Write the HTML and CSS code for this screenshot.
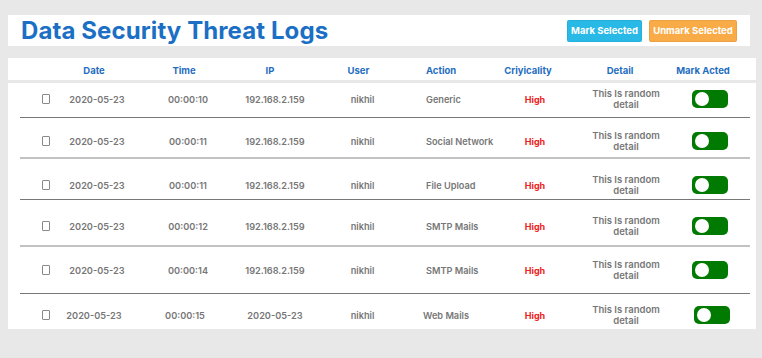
FILE: index.html
```html
<!DOCTYPE html>
<html lang="en">
<head>
    <meta charset="UTF-8">
    <meta name="viewport" content="width=device-width, initial-scale=1.0">
    <title>Data Security Threat Logs</title>
    <link rel="stylesheet" href="styles.css">
</head>
<body>
    <div class="topbar">
        <h1>Data Security Threat Logs</h1>
        <div class="actions">
            <button class="btn btn-mark">Mark Selected</button>
            <button class="btn btn-unmark">Unmark Selected</button>
        </div>
    </div>

    <div class="logs">
        <div class="logs-head grid">
            <div></div>
            <div class="c-date">Date</div>
            <div class="c-time">Time</div>
            <div class="c-ip">IP</div>
            <div class="c-user">User</div>
            <div class="c-action">Action</div>
            <div class="c-crit">Criyicality</div>
            <div class="c-detail">Detail</div>
            <div class="c-mark">Mark Acted</div>
        </div>

        <div class="logs-body">
            <div class="log-row grid">
                <div class="c-check"><span class="checkbox"></span></div>
                <div class="c-date">2020-05-23</div>
                <div class="c-time">00:00:10</div>
                <div class="c-ip">192.168.2.159</div>
                <div class="c-user">nikhil</div>
                <div class="c-action">Generic</div>
                <div class="c-crit">High</div>
                <div class="c-detail">This Is random<br>detail</div>
                <div class="c-mark"><span class="toggle"></span></div>
            </div>
            <div class="log-row grid">
                <div class="c-check"><span class="checkbox"></span></div>
                <div class="c-date">2020-05-23</div>
                <div class="c-time">00:00:11</div>
                <div class="c-ip">192.168.2.159</div>
                <div class="c-user">nikhil</div>
                <div class="c-action">Social Network</div>
                <div class="c-crit">High</div>
                <div class="c-detail">This Is random<br>detail</div>
                <div class="c-mark"><span class="toggle"></span></div>
            </div>
            <div class="log-row grid">
                <div class="c-check"><span class="checkbox"></span></div>
                <div class="c-date">2020-05-23</div>
                <div class="c-time">00:00:11</div>
                <div class="c-ip">192.168.2.159</div>
                <div class="c-user">nikhil</div>
                <div class="c-action">File Upload</div>
                <div class="c-crit">High</div>
                <div class="c-detail">This Is random<br>detail</div>
                <div class="c-mark"><span class="toggle"></span></div>
            </div>
            <div class="log-row grid">
                <div class="c-check"><span class="checkbox"></span></div>
                <div class="c-date">2020-05-23</div>
                <div class="c-time">00:00:12</div>
                <div class="c-ip">192.168.2.159</div>
                <div class="c-user">nikhil</div>
                <div class="c-action">SMTP Mails</div>
                <div class="c-crit">High</div>
                <div class="c-detail">This Is random<br>detail</div>
                <div class="c-mark"><span class="toggle"></span></div>
            </div>
            <div class="log-row grid">
                <div class="c-check"><span class="checkbox"></span></div>
                <div class="c-date">2020-05-23</div>
                <div class="c-time">00:00:14</div>
                <div class="c-ip">192.168.2.159</div>
                <div class="c-user">nikhil</div>
                <div class="c-action">SMTP Mails</div>
                <div class="c-crit">High</div>
                <div class="c-detail">This Is random<br>detail</div>
                <div class="c-mark"><span class="toggle"></span></div>
            </div>
            <div class="log-row grid">
                <div class="c-check"><span class="checkbox"></span></div>
                <div class="c-date">2020-05-23</div>
                <div class="c-time">00:00:15</div>
                <div class="c-ip">2020-05-23</div>
                <div class="c-user">nikhil</div>
                <div class="c-action">Web Mails</div>
                <div class="c-crit">High</div>
                <div class="c-detail">This Is random<br>detail</div>
                <div class="c-mark"><span class="toggle"></span></div>
            </div>
        </div>
    </div>
</body>
</html>
```

FILE: styles.css
```css
body {
    margin: 0;
    padding: 15px 0 0 8px;
    background-color: #e8e8e8;
    font-family: Inter, "Open Sans", sans-serif;
}
.topbar {
    width: 742px;
    height: 31px;
    background-color: white;
    display: flex;
    align-items: center;
    justify-content: space-between;
    padding: 0 13px;
    box-sizing: border-box;
}
.topbar h1 {
    margin: 0;
    font-size: 24px;
    font-weight: 700;
    color: #1b6fc4;
    letter-spacing: 0.1px;
}
.actions {
    display: flex;
    gap: 7px;
}
.btn {
    height: 22px;
    padding: 0;
    border: 1px solid rgba(0,0,0,0.05);
    border-radius: 2px;
    color: white;
    font-family: inherit;
    font-size: 9.5px;
    font-weight: 700;
    white-space: nowrap;
    cursor: pointer;
}
.btn-mark {
    width: 75px;
    background-color: #29b9e6;
}
.btn-unmark {
    width: 88px;
    background-color: #f9ab47;
}
.logs {
    width: 748px;
    margin-top: 12px;
}
.grid {
    display: grid;
    grid-template-columns: 30px 88px 92px 80px 97px 80px 82px 102px 64px 1fr;
    align-items: center;
    text-align: center;
}
.logs-head {
    height: 22px;
    padding: 2px 0 0 12px;
    box-sizing: border-box;
    background-color: white;
    color: #1f6ebf;
    font-size: 9.5px;
    font-weight: 700;
}
.logs-body {
    margin-top: 3px;
    padding: 0 6px 1px 12px;
    background-color: white;
}
.c-action {
    text-align: left;
    padding-left: 19px;
    white-space: nowrap;
}
.log-row {
    color: #777;
    font-size: 9.2px;
    font-weight: 600;
    white-space: nowrap;
}
.log-row > div {
    height: 22px;
    display: flex;
    align-items: center;
    justify-content: center;
}
.log-row .c-action {
    justify-content: flex-start;
}
.log-row .c-date { padding-left: 6px; }
.log-row .c-time { padding-left: 8px; }
.log-row .c-ip { padding-left: 10px; }
.log-row .c-user { padding-left: 8px; }
.log-row .c-crit { padding-left: 14px; color: #f01c24; font-size: 9px; font-weight: 700; }
.log-row .c-detail { padding-left: 12px; line-height: 11px; font-size: 9.5px; }
.log-row .c-mark { padding-left: 14px; }
.log-row .c-check {
    justify-content: flex-start;
    padding-left: 22px;
}
.log-row:nth-child(odd) {
    border-bottom: 1px solid #777;
}
.log-row:nth-child(even) {
    border-bottom: 2px solid #c2c2c2;
}
.log-row:last-child {
    border-bottom: none;
}
.log-row:nth-child(1) { padding: 5px 0 7px; }
.log-row:nth-child(2) { padding: 12px 0 5px; }
.log-row:nth-child(3) { padding: 15px 0 3px; }
.log-row:nth-child(4) { padding: 15px 0 8px; }
.log-row:nth-child(5) { padding: 12px 0 12px; }
.log-row:nth-child(6) { padding: 10px 0 2px; }
.log-row:last-child .c-date { padding-left: 0; }
.log-row:last-child .c-time { padding-left: 2px; }
.log-row:last-child .c-action { padding-left: 16px; }
.log-row:last-child .c-mark { padding-left: 18px; }
.checkbox {
    width: 8px;
    height: 8px;
    border: 1px solid #8a8a8a;
    border-radius: 1px;
}
.toggle {
    position: relative;
    width: 36px;
    height: 18px;
    border-radius: 5px;
    background-color: #007a00;
}
.toggle::after {
    content: "";
    position: absolute;
    left: 3px;
    top: 2px;
    width: 14px;
    height: 14px;
    border-radius: 50%;
    background-color: white;
}
```
